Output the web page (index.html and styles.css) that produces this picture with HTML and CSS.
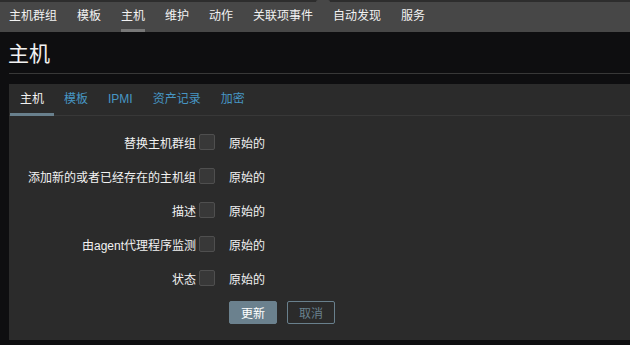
FILE: index.html
```html
<!DOCTYPE html>
<html lang="zh-CN">
<head>
    <meta charset="UTF-8">
    <title>主机</title>
    <link rel="stylesheet" href="styles.css">
</head>
<body>

<div class="top-strip"><span class="notch"></span></div>
<nav class="top-nav">
    <a href="#">主机群组</a>
    <a href="#">模板</a>
    <a href="#" class="selected">主机</a>
    <a href="#">维护</a>
    <a href="#">动作</a>
    <a href="#">关联项事件</a>
    <a href="#">自动发现</a>
    <a href="#">服务</a>
</nav>

<div class="header">
    <h1>主机</h1>
</div>

<div class="panel">
    <ul class="tabs">
        <li class="active">主机</li>
        <li>模板</li>
        <li>IPMI</li>
        <li>资产记录</li>
        <li>加密</li>
    </ul>

    <form class="mass-form">
        <div class="form-row">
            <label for="c1">替换主机群组</label>
            <input type="checkbox" id="c1">
            <span class="value">原始的</span>
        </div>
        <div class="form-row">
            <label for="c2">添加新的或者已经存在的主机组</label>
            <input type="checkbox" id="c2">
            <span class="value">原始的</span>
        </div>
        <div class="form-row">
            <label for="c3">描述</label>
            <input type="checkbox" id="c3">
            <span class="value">原始的</span>
        </div>
        <div class="form-row">
            <label for="c4">由agent代理程序监测</label>
            <input type="checkbox" id="c4">
            <span class="value">原始的</span>
        </div>
        <div class="form-row">
            <label for="c5">状态</label>
            <input type="checkbox" id="c5">
            <span class="value">原始的</span>
        </div>
        <div class="form-buttons">
            <button type="submit" class="btn-main">更新</button>
            <button type="button" class="btn-alt">取消</button>
        </div>
    </form>
</div>

</body>
</html>
```

FILE: styles.css
```css
body {
    font-family: "Liberation Sans", Arial, "Noto Sans CJK SC", sans-serif;
    font-size: 12px;
    margin: 0;
    padding: 0;
    background-color: #0e0e10;
    color: #f2f2f2;
    overflow: hidden;
}
.top-strip {
    height: 2px;
    background-color: #2d2d2d;
    position: relative;
}
.notch {
    position: absolute;
    left: 316px;
    top: 0;
    width: 14px;
    height: 2px;
    background-color: #474747;
    border-radius: 3px 3px 0 0;
}
.top-nav {
    display: flex;
    height: 30px;
    padding-left: 9px;
    background-color: #474747;
}
.top-nav a {
    display: block;
    margin-right: 20px;
    padding-top: 2px;
    line-height: 25px;
    color: #f2f2f2;
    text-decoration: none;
    border-bottom: 3px solid transparent;
}
.top-nav a.selected {
    border-bottom-color: #787878;
}
.header {
    margin: 0 0 10px 9px;
    padding: 10px 0 7px;
    border-bottom: 1px solid #383838;
}
h1 {
    margin: 0 0 0 -1px;
    font-size: 21px;
    font-weight: normal;
    line-height: 24px;
    color: #f2f2f2;
}
.panel {
    margin-left: 9px;
    background-color: #2b2b2b;
    padding-bottom: 16px;
}
.tabs {
    display: flex;
    list-style: none;
    margin: 0;
    padding: 0 0 0 1px;
    border-bottom: 1px solid #383838;
}
.tabs li {
    padding: 2px 10px 0;
    line-height: 27px;
    color: #4796c4;
    border-bottom: 3px solid transparent;
    margin-bottom: -1px;
}
.tabs li.active {
    color: #f2f2f2;
    border-bottom-color: #69808d;
}
.mass-form {
    padding-top: 9px;
}
.form-row {
    display: flex;
    align-items: center;
    height: 34px;
}
.form-row label {
    width: 187px;
    text-align: right;
    color: #f2f2f2;
}
.form-row input {
    appearance: none;
    width: 16px;
    height: 16px;
    margin: 0 14px 0 3px;
    background-color: #383838;
    border: 1px solid #4f4f4f;
    border-radius: 2px;
}
.value {
    color: #f2f2f2;
}
.form-buttons {
    display: flex;
    gap: 10px;
    margin: 6px 0 0 220px;
}
button {
    width: 48px;
    height: 23px;
    font-family: inherit;
    font-size: 12px;
    border-radius: 2px;
    padding: 0;
    cursor: pointer;
}
.btn-main {
    background-color: #6b818e;
    border: 1px solid #6b818e;
    color: #ffffff;
}
.btn-alt {
    background-color: transparent;
    border: 1px solid #69808d;
    color: #69808d;
}
```
